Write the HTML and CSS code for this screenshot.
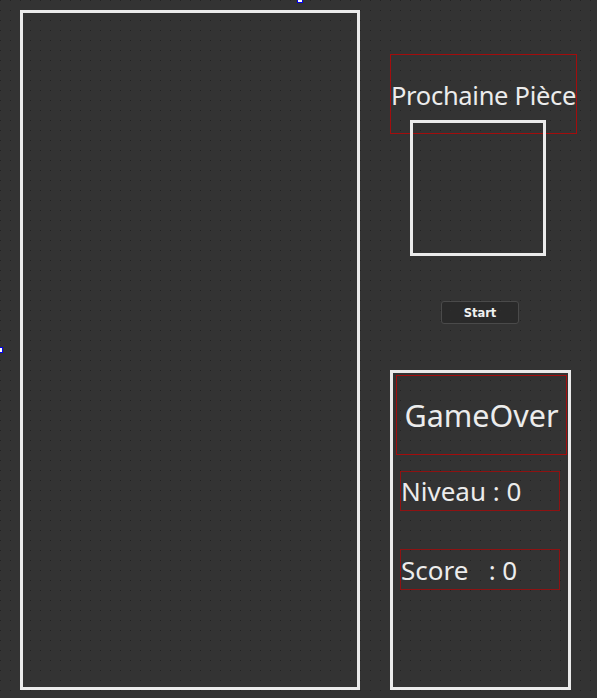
FILE: index.html
```html
<!DOCTYPE html>
<html>
<head>
<meta charset="utf-8">
<link rel="stylesheet" href="styles.css">
</head>
<body>
<div class="page">
  <div class="board"></div>
  <div class="side">
    <div class="next-label">Prochaine Pièce</div>
    <div class="next-box"></div>
    <button class="start">Start</button>
    <div class="panel">
      <div class="gameover">GameOver</div>
      <div class="stat stat-level">Niveau : 0</div>
      <div class="stat stat-score">Score&nbsp;&nbsp; : 0</div>
    </div>
  </div>
</div>
<div class="handle handle-left"></div>
<div class="handle handle-top"></div>
</body>
</html>
```

FILE: styles.css
```css
html, body {
  margin: 0;
  padding: 0;
}
body {
  width: 597px;
  height: 698px;
  overflow: hidden;
  position: relative;
  background-color: #333333;
  background-image: conic-gradient(from 0deg at 1px 1px, transparent 75%, #222222 0);
  background-size: 10px 10px;
  font-family: "Noto Sans", "Open Sans", sans-serif;
  color: #ececec;
}
.page {
  display: flex;
  padding: 10px 0 0 20px;
}
.board {
  width: 340px;
  height: 680px;
  box-sizing: border-box;
  border: 3px solid #ebebeb;
  flex: none;
}
.side {
  margin-left: 30px;
  width: 187px;
  display: flex;
  flex-direction: column;
  align-items: flex-start;
}
.next-label {
  margin-top: 44px;
  width: 187px;
  height: 80px;
  box-sizing: border-box;
  border: 1px solid #a30d0d;
  display: flex;
  align-items: center;
  justify-content: center;
  font-size: 25.5px;
  white-space: nowrap;
  letter-spacing: -0.3px;
  padding-top: 1px;
}
.next-box {
  margin-top: -14px;
  margin-left: 20px;
  width: 136px;
  height: 136px;
  box-sizing: border-box;
  border: 3px solid #ebebeb;
}
.start {
  margin-top: 45px;
  margin-left: 51px;
  width: 78px;
  height: 23px;
  box-sizing: border-box;
  background: #2a2a2a;
  border: 1px solid #4a4a4a;
  border-radius: 3px;
  color: #f0f0f0;
  font-family: "DejaVu Sans", sans-serif;
  font-weight: bold;
  font-size: 11.5px;
  padding: 1px 0 0;
}
.panel {
  margin-top: 46px;
  width: 181px;
  height: 320px;
  box-sizing: border-box;
  border: 3px solid #ebebeb;
  display: flex;
  flex-direction: column;
  align-items: flex-start;
}
.gameover {
  margin: 2px 0 0 3px;
  width: 171px;
  height: 80px;
  box-sizing: border-box;
  border: 1px solid #a30d0d;
  display: flex;
  align-items: center;
  justify-content: center;
  font-size: 30.5px;
}
.stat {
  margin-left: 7px;
  width: 160px;
  box-sizing: border-box;
  border: 1px solid #8e1212;
  display: flex;
  align-items: center;
  font-size: 26px;
  white-space: nowrap;
}
.stat-level {
  margin-top: 16px;
  height: 40px;
}
.stat-score {
  margin-top: 38px;
  height: 41px;
}
.handle {
  position: absolute;
  width: 6px;
  height: 6px;
  box-sizing: border-box;
  border: 1px solid #0000ee;
  background: #ffffff;
}
.handle-left {
  left: -3px;
  top: 347px;
}
.handle-top {
  left: 297px;
  top: -3px;
}
```
